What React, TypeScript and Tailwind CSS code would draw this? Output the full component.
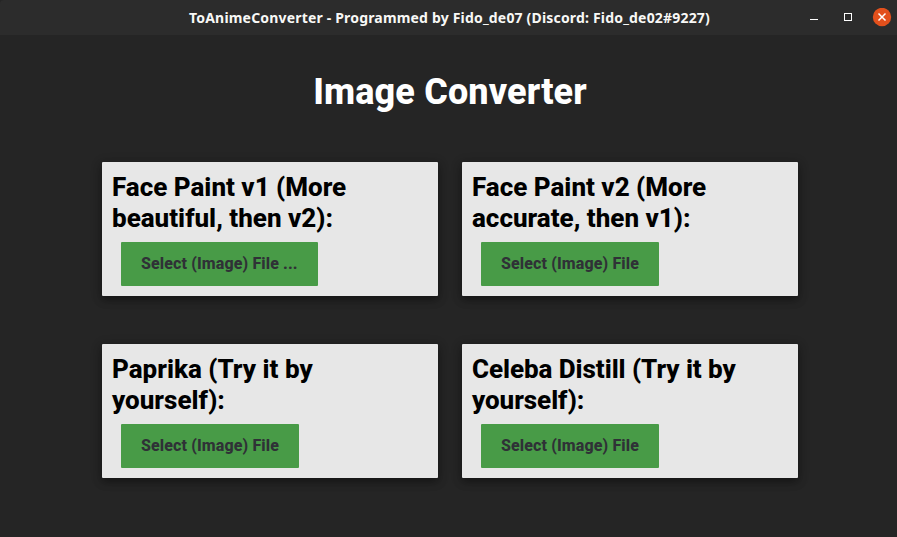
type CardProps = { lines: string[]; label: string; wide?: boolean; tight?: boolean };

const cards: CardProps[] = [
  { lines: ["Face Paint v1 (More", "beautiful, then v2):"], label: "Select (Image) File ...", wide: true },
  { lines: ["Face Paint v2 (More", "accurate, then v1):"], label: "Select (Image) File" },
  { lines: ["Paprika (Try it by", "yourself):"], label: "Select (Image) File" },
  { lines: ["Celeba Distill (Try it by", "yourself):"], label: "Select (Image) File", tight: true },
];

function TitleBar() {
  return (
    <header className="grid h-[35px] shrink-0 grid-cols-[187px_1fr_187px] items-center rounded-tl-[4px] bg-[#2c2c2c]">
      <span />
      <span className="flex justify-center whitespace-nowrap pl-[2px] font-['Noto_Sans',sans-serif] text-[14px] leading-5 font-bold tracking-[0.18px] text-[#f8f8f6]">
        ToAnimeConverter - Programmed by Fido_de07 (Discord: Fido_de02#9227)
      </span>
      <div className="flex justify-end pr-[5px]">
        <svg width="87" height="20" viewBox="0 0 87 20" fill="none">
          <path d="M5 11.5h8" stroke="#fff" />
          <rect x="39.5" y="5.5" width="7" height="7" stroke="#fff" />
          <circle cx="77" cy="9" r="9.2" fill="#e2501c" />
          <path d="M73.5 5.5l7 7m0-7l-7 7" stroke="#fff" strokeWidth="1.5" />
        </svg>
      </div>
    </header>
  );
}

function Card({ lines, label, wide, tight }: CardProps) {
  return (
    <section className="h-[134px] rounded-[1px] bg-[#e7e7e7] px-[10px] pt-[10px] shadow-[0_4px_8px_rgba(0,0,0,0.3),0_2px_12px_rgba(0,0,0,0.22)]">
      <h2
        className={`${tight ? "tracking-[-0.06px]" : "tracking-normal"} text-[26px] leading-[31px] font-extrabold whitespace-nowrap text-black`}
      >
        {lines[0]}
        <br />
        {lines[1]}
      </h2>
      <button
        className={`${wide ? "w-[197px]" : "w-[178px]"} mt-2 ml-[9px] flex h-11 items-center rounded-[1px] bg-[#489b47] pl-5 text-[16px] font-extrabold tracking-[0.12px] whitespace-nowrap text-[#2f3136]`}
      >
        {label}
      </button>
    </section>
  );
}

export default function App() {
  return (
    <div className="flex h-[537px] w-[897px] flex-col overflow-hidden bg-[#252525] font-[Roboto,sans-serif]">
      <TitleBar />
      <main className="flex flex-col">
        <h1 className="mt-[36px] pl-[3px] text-center text-[36px] leading-[42px] font-extrabold tracking-[0.15px] text-white">
          Image Converter
        </h1>
        <div className="mt-[49px] ml-[102px] grid w-[696px] grid-cols-2 gap-x-6 gap-y-12">
          {cards.map((card) => (
            <Card key={card.lines.join(" ")} {...card} />
          ))}
        </div>
      </main>
    </div>
  );
}
